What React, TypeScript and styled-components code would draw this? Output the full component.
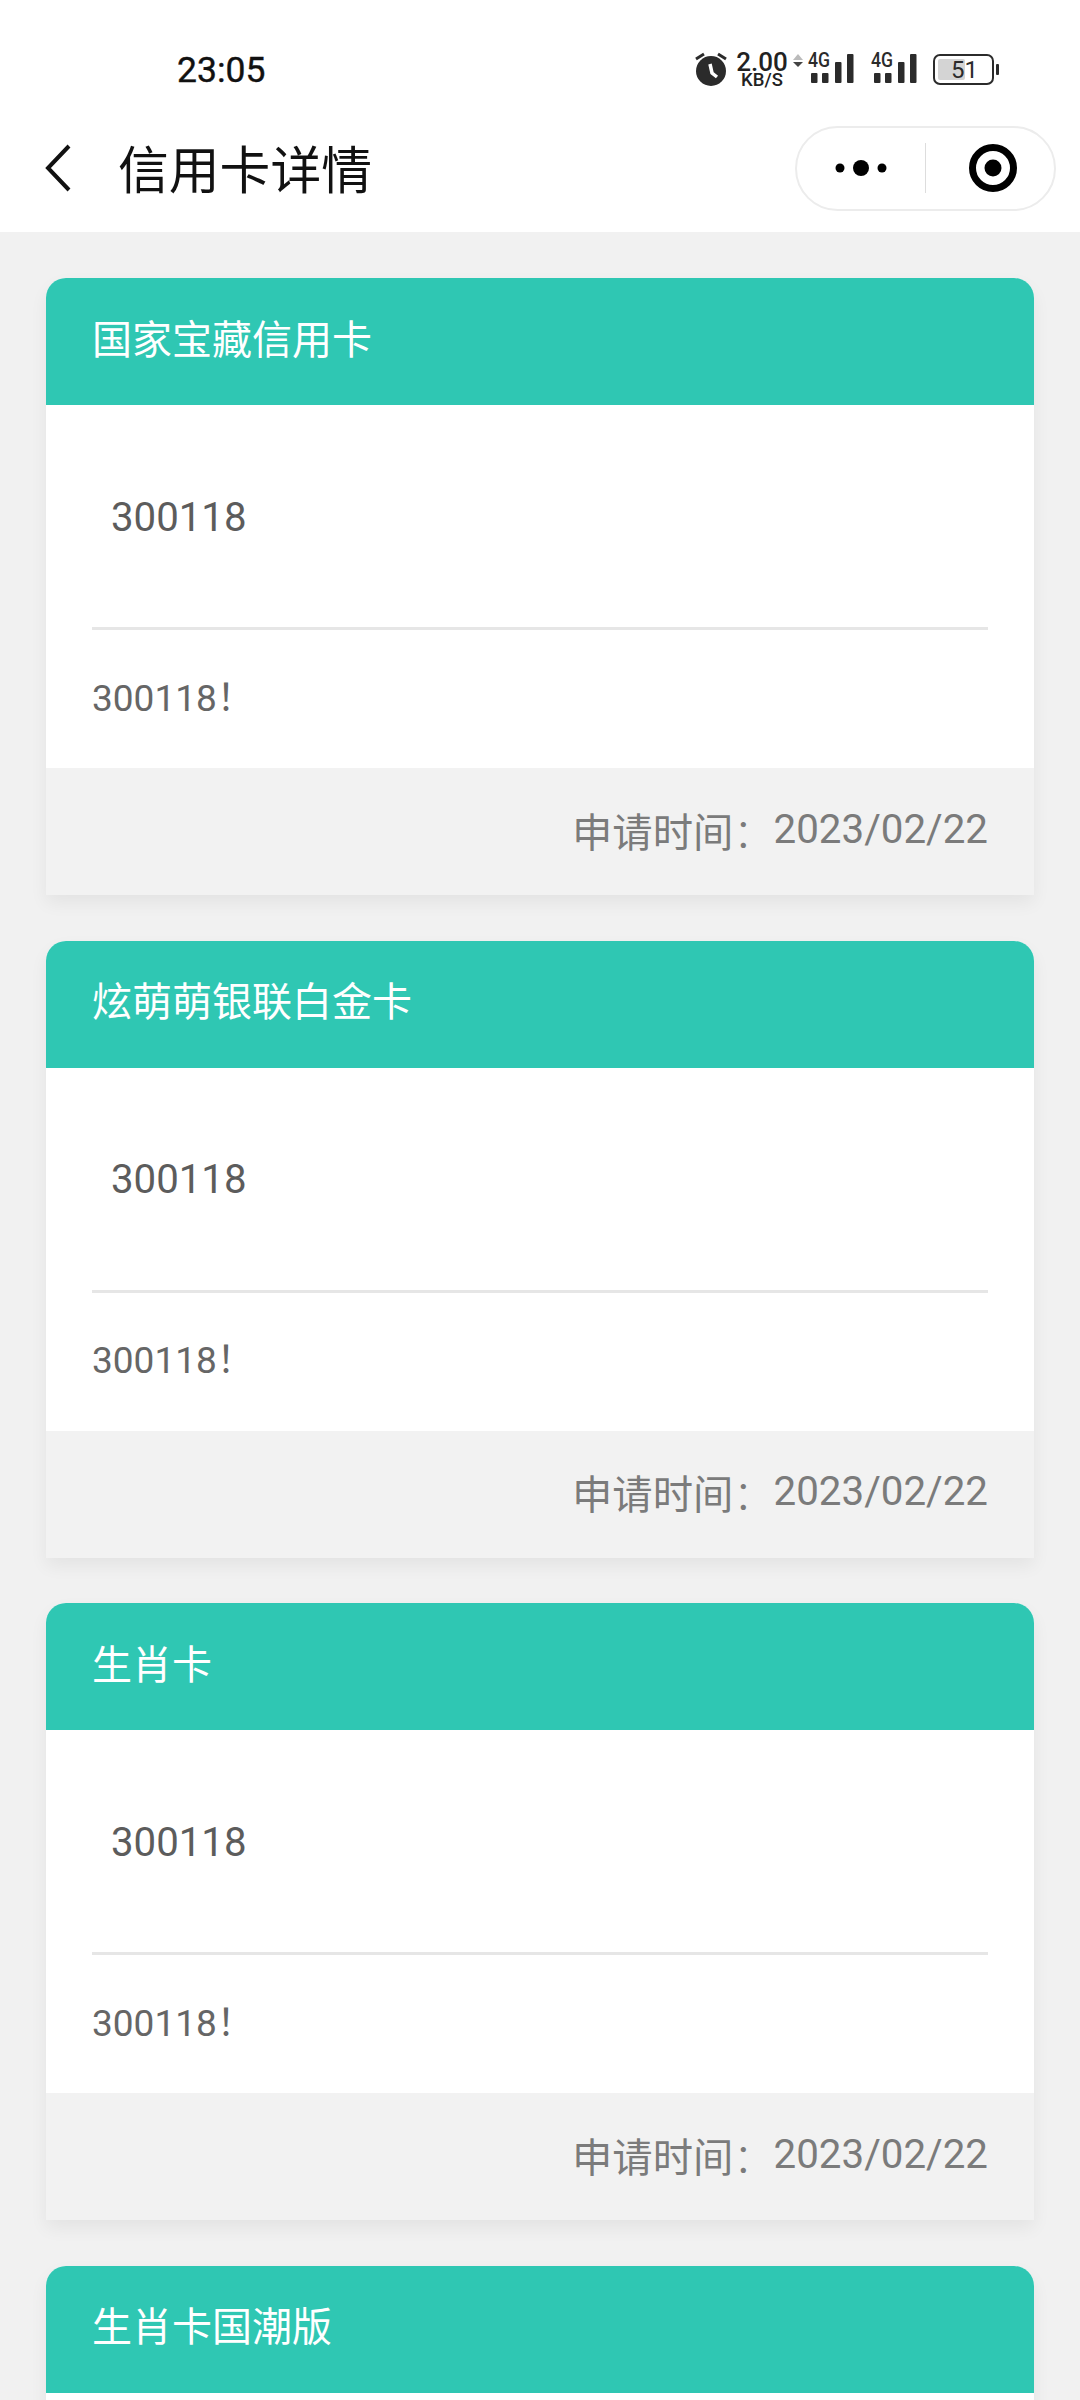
import React, {FC} from 'react';
import styled, {createGlobalStyle} from 'styled-components';

const GlobalStyle = createGlobalStyle`
  html, body {
    margin: 0;
    height: 2400px;
    overflow: hidden;
    background: #f1f1f1;
    font-family: Roboto, "Noto Sans CJK SC", sans-serif;
  }
`

const TopArea = styled.div`
  background: #fff;
  height: 232px;
`

const StatusBar = styled.div`
  height: 104px;
  box-sizing: border-box;
  padding: 36px 81px 0 177px;
  display: flex;
  align-items: center;
  justify-content: space-between;
`

const Time = styled.span`
  font-size: 35.5px;
  font-weight: 400;
  -webkit-text-stroke: 0.4px #111;
  color: #111;
`

const StatusIcons = styled.div`
  display: flex;
  align-items: center;
`

const Speed = styled.div`
  display: flex;
  flex-direction: column;
  align-items: center;
  margin: 0 6px 0 10px;
  width: 50px;
  color: #222;
  b {
    font-size: 26px;
    line-height: 21px;
    font-weight: 500;
  }
  span {
    font-size: 18.5px;
    line-height: 15px;
    font-weight: 500;
  }
`

const SignalSvg = styled.svg`
  margin-right: 16px;
`

const NavBar = styled.div`
  height: 128px;
  box-sizing: border-box;
  padding: 0 24px 0 44px;
  display: flex;
  align-items: center;
`

const NavTitle = styled.h1`
  margin: 0 0 3px 46px;
  flex: 1;
  font-size: 50.8px;
  font-weight: 400;
  color: #111;
`

const Capsule = styled.div`
  width: 261px;
  height: 85px;
  box-sizing: border-box;
  border: 2px solid #ececec;
  border-radius: 43px;
  display: flex;
  align-items: center;
`

const CapsuleSide = styled.div`
  flex: 1;
  height: 50px;
  box-sizing: border-box;
  display: flex;
  align-items: center;
  justify-content: center;
  & + & {
    border-left: 1px solid #ddd;
  }
`

const TargetSvg = styled.svg`
  margin-left: 6px;
`

const CardList = styled.div`
  padding: 46px 46px 0;
  display: flex;
  flex-direction: column;
  gap: 45.6px;
`

const Card = styled.div`
  background: #fff;
  border-radius: 20px 20px 0 0;
  overflow: hidden;
  flex: none;
  box-shadow: 0 8px 18px rgba(0, 0, 0, 0.06);
`

const CardHeader = styled.div`
  height: 127px;
  box-sizing: border-box;
  padding: 0 46px 10px;
  display: flex;
  align-items: center;
  background: #2fc7b3;
  color: #fff;
  font-size: 40px;
`

const CardBody = styled.div`
  padding: 0 46px;
`

const CardName = styled.div`
  height: 225px;
  box-sizing: border-box;
  padding: 2px 0 0 19px;
  display: flex;
  align-items: center;
  border-bottom: 3px solid #e6e6e6;
  color: #5c5c5c;
  font-size: 40.2px;
`

const CardDesc = styled.div`
  height: 138px;
  box-sizing: border-box;
  padding-bottom: 9px;
  display: flex;
  align-items: center;
  color: #666;
  font-size: 37px;
`

const CardFooter = styled.div`
  height: 127px;
  box-sizing: border-box;
  padding: 0 46px 5px 0;
  display: flex;
  align-items: center;
  justify-content: flex-end;
  background: #f2f2f2;
  color: #7b7b7b;
  font-size: 40.3px;
`

const Colon = styled.span`
  font-weight: 300;
`

const AlarmIcon: FC = () => (
    <svg width="32" height="36" viewBox="0 0 32 36">
        <circle cx="16" cy="19" r="15" fill="#2b2b2b"/>
        <path d="M15 12l2 9 5 4" fill="none" stroke="#fff" strokeWidth="3.5"/>
        <path d="M1 7l8-5M31 7l-8-5" stroke="#2b2b2b" strokeWidth="3"/>
    </svg>
);

const SignalIcon: FC<{ arrows?: boolean }> = ({arrows}) => (
    <SignalSvg width={arrows ? 62 : 46} height="44" viewBox={`${arrows ? -15 : 0} -4 ${arrows ? 62 : 46} 44`}>
        {arrows && <path d="M-15 8l5-6 5 6z" fill="#bbb"/>}
        {arrows && <path d="M-15 10l5 5 5-5z" fill="#444"/>}
        <text x="0" y="15" fontSize="20" fontWeight="500" fontFamily="Roboto" fill="#2b2b2b" textLength="22" lengthAdjust="spacingAndGlyphs">4G</text>
        <rect x="3" y="21" width="6.5" height="10" rx="1" fill="#2b2b2b"/>
        <rect x="14" y="21" width="6.5" height="10" rx="1" fill="#2b2b2b"/>
        <rect x="27" y="10" width="6.5" height="21" rx="1" fill="#2b2b2b"/>
        <rect x="39" y="2" width="6.5" height="29" rx="1" fill="#2b2b2b"/>
    </SignalSvg>
);

const BatteryIcon: FC = () => (
    <svg width="66" height="34" viewBox="0 0 66 34">
        <rect x="1" y="2" width="59" height="29" rx="6" fill="none" stroke="#2b2b2b" strokeWidth="2"/>
        <rect x="5" y="6" width="27" height="21" rx="2" fill="#d4d4d4"/>
        <rect x="63" y="11" width="3" height="11" rx="1" fill="#2b2b2b"/>
        <text x="18" y="25" fontSize="24" fontFamily="Roboto" fill="#2b2b2b">51</text>
    </svg>
);

const MoreIcon: FC = () => (
    <svg width="54" height="18" viewBox="0 0 54 18">
        <circle cx="6" cy="9" r="4.5" fill="#000"/>
        <circle cx="27" cy="9" r="8" fill="#000"/>
        <circle cx="48" cy="9" r="4.5" fill="#000"/>
    </svg>
);

const TargetIcon: FC = () => (
    <TargetSvg width="50" height="50" viewBox="0 0 50 50">
        <circle cx="25" cy="25" r="20.5" fill="none" stroke="#000" strokeWidth="7"/>
        <circle cx="25" cy="25" r="8.5" fill="#000"/>
    </TargetSvg>
);

const cards = ['国家宝藏信用卡', '炫萌萌银联白金卡', '生肖卡', '生肖卡国潮版'];

const App: FC = () => {
    return (
        <>
            <GlobalStyle/>
            <TopArea>
                <StatusBar>
                    <Time>23:05</Time>
                    <StatusIcons>
                        <AlarmIcon/>
                        <Speed>
                            <b>2.00</b>
                            <span>KB/S</span>
                        </Speed>
                        <SignalIcon arrows/>
                        <SignalIcon/>
                        <BatteryIcon/>
                    </StatusIcons>
                </StatusBar>
                <NavBar>
                    <svg width="28" height="50" viewBox="0 0 28 50">
                        <path d="M25 3L4 25l21 22" fill="none" stroke="#111" strokeWidth="4"/>
                    </svg>
                    <NavTitle>信用卡详情</NavTitle>
                    <Capsule>
                        <CapsuleSide><MoreIcon/></CapsuleSide>
                        <CapsuleSide><TargetIcon/></CapsuleSide>
                    </Capsule>
                </NavBar>
            </TopArea>
            <CardList>
                {cards.map(name => (
                    <Card key={name}>
                        <CardHeader>{name}</CardHeader>
                        <CardBody>
                            <CardName>300118</CardName>
                            <CardDesc>300118！</CardDesc>
                        </CardBody>
                        <CardFooter>申请时间<Colon>：</Colon>2023/02/22</CardFooter>
                    </Card>
                ))}
            </CardList>
        </>
    );
};

export default App;
